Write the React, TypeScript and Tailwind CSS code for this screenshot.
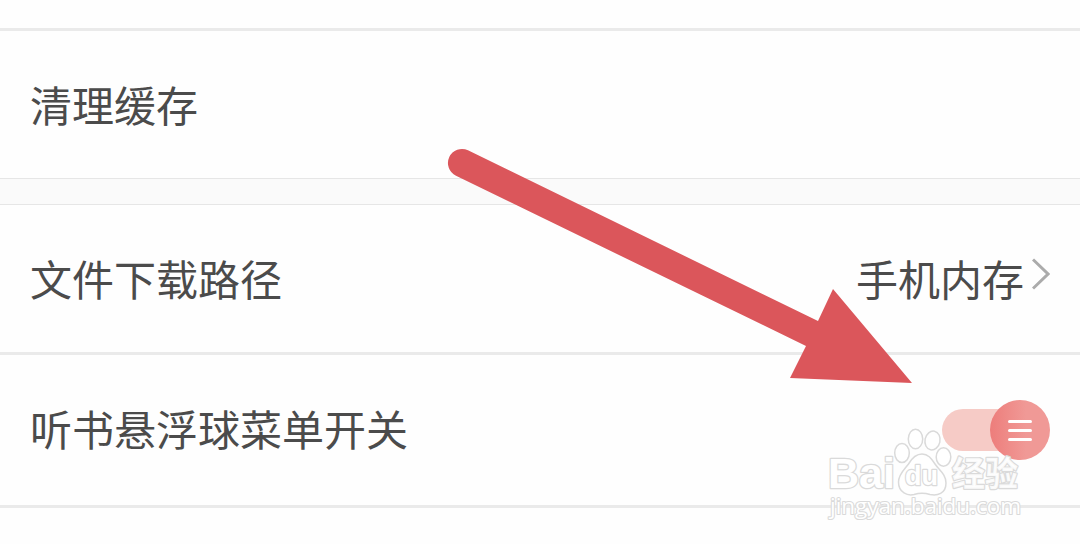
import React from 'react'

interface SettingRowProps {
  label: string
  className: string
  children?: React.ReactNode
}

function SettingRow({ label, className, children }: SettingRowProps) {
  return (
    <div className={`flex items-center justify-between pl-[30px] pr-[30px] ${className}`}>
      <span className="text-[42px] leading-[60px] whitespace-nowrap">{label}</span>
      {children}
    </div>
  )
}

function ChevronIcon() {
  return (
    <svg className="-mt-2 ml-2 h-8 w-[18px]" viewBox="0 0 18 32" fill="none">
      <path d="M1 1.5 L16 16 L1 30.5" stroke="#ababab" strokeWidth="3" />
    </svg>
  )
}

function MenuToggle() {
  return (
    <div className="mt-1 flex h-[60px] w-[108px] items-center">
      <div className="h-[42px] w-[78px] shrink-0 rounded-l-full bg-[#f6cbc6]" />
      <div className="-ml-[30px] flex h-[60px] w-[60px] shrink-0 flex-col items-center justify-center gap-[6px] rounded-full bg-linear-to-r from-[#ed7d7b] to-[#f09996] to-60%">
        <div className="h-[3px] w-6 rounded-full bg-white" />
        <div className="h-[3px] w-6 rounded-full bg-white" />
        <div className="h-[3px] w-6 rounded-full bg-white" />
      </div>
    </div>
  )
}

function PointerArrow() {
  return (
    <svg className="absolute left-0 top-0 h-[544px] w-[1080px]" viewBox="0 0 1080 544">
      <path
        d="M468 150.3 L818 321 L833 289 L912 383 L790 378 L806 346 L456 175.7 A14 14 0 1 1 468 150.3 Z"
        fill="#db565b"
      />
    </svg>
  )
}

function Watermark() {
  return (
    <svg
      className="absolute left-[820px] top-[425px] h-[100px] w-[210px]"
      viewBox="0 0 210 100"
      fill="#ffffff"
      stroke="#dadada"
      strokeWidth="1.5"
      strokeLinejoin="round"
    >
      <g fillOpacity="0.8">
        <ellipse cx="82" cy="28" rx="7.3" ry="9.5" />
        <ellipse cx="95.5" cy="14" rx="7.2" ry="9.8" />
        <ellipse cx="112.5" cy="15.5" rx="7.5" ry="9.5" transform="rotate(12 112.5 15.5)" />
        <ellipse cx="123.5" cy="32" rx="7.3" ry="9.3" />
        <path d="M102 29 C96 29 92 33 88.5 39 C85 44 78.5 49 78.5 57 C78.5 68 88 71 94 69.5 C99 68 105 68 110 69.5 C117 71 126 69 126 58 C126 49 119 45 115 39 C111 33 108 29 102 29 Z" />
      </g>
      <text x="8" y="63" textLength="67" lengthAdjust="spacingAndGlyphs" fontSize="43" className="font-['Liberation_Sans',sans-serif] font-bold [paint-order:stroke]" strokeWidth="2.6">Bai</text>
      <text x="85" y="59.5" textLength="33" lengthAdjust="spacingAndGlyphs" fontSize="27" className="font-['Liberation_Sans',sans-serif] font-bold [paint-order:stroke]" strokeWidth="2.4">du</text>
      <text x="132" y="61" textLength="66" lengthAdjust="spacingAndGlyphs" fontSize="34" className="font-['Noto_Sans_CJK_SC',sans-serif] font-bold [paint-order:stroke]" fillOpacity="0.85" strokeWidth="2.4">经验</text>
      <text x="10" y="89" textLength="191" lengthAdjust="spacingAndGlyphs" fontSize="22" className="font-['Open_Sans',sans-serif] [paint-order:stroke]" strokeWidth="2.2">jingyan.baidu.com</text>
    </svg>
  )
}

export default function App() {
  return (
    <div className="relative h-[544px] w-[1080px] overflow-hidden bg-[#fefefe] font-['Noto_Sans_CJK_SC',sans-serif] text-[#4b4b4b]">
      <div className="h-[31px] border-b-[3px] border-[#eaeaea]" />
      <SettingRow label="清理缓存" className="h-[147px] pb-0.5" />
      {/* Gap between setting groups */}
      <div className="h-[27px] border-y border-[#e6e6e6] bg-[#fafafa]" />
      <SettingRow label="文件下载路径" className="h-[150px] border-b-[3px] border-[#eaeaea] pb-0.5">
        <div className="flex items-center">
          <span className="text-[42px] leading-[60px]">手机内存</span>
          <ChevronIcon />
        </div>
      </SettingRow>
      <SettingRow label="听书悬浮球菜单开关" className="h-[153px] border-b-[3px] border-[#eaeaea] pb-1">
        <MenuToggle />
      </SettingRow>
      <PointerArrow />
      <Watermark />
    </div>
  )
}
